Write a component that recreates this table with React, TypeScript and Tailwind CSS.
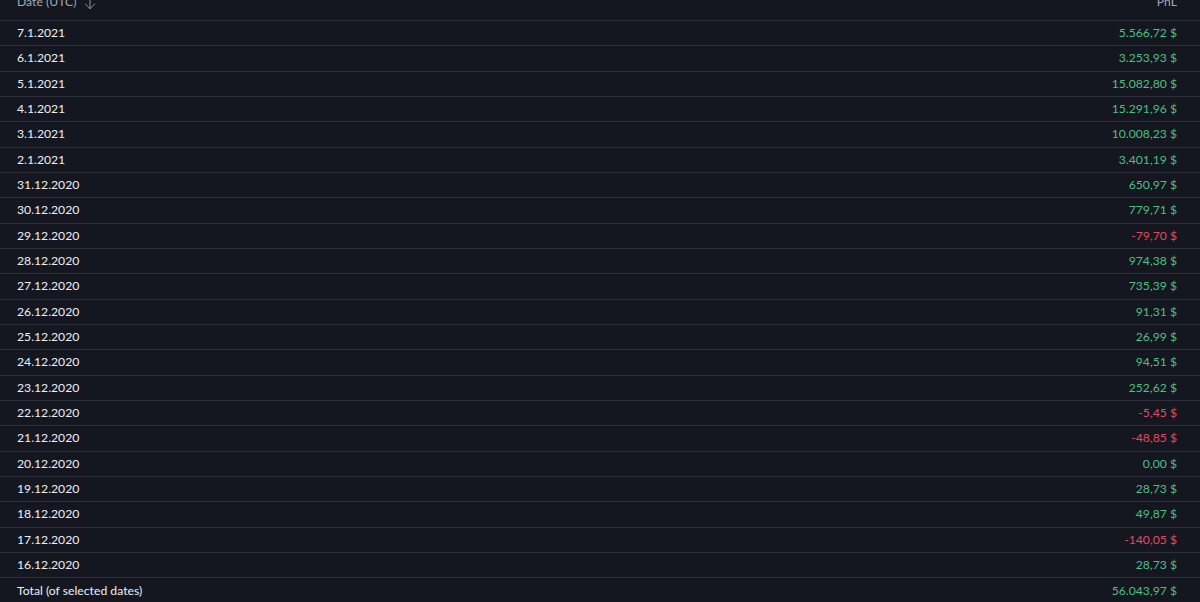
import { ArrowDown } from "lucide-react";

const rows: [string, string][] = [
  ["7.1.2021", "5.566,72 $"],
  ["6.1.2021", "3.253,93 $"],
  ["5.1.2021", "15.082,80 $"],
  ["4.1.2021", "15.291,96 $"],
  ["3.1.2021", "10.008,23 $"],
  ["2.1.2021", "3.401,19 $"],
  ["31.12.2020", "650,97 $"],
  ["30.12.2020", "779,71 $"],
  ["29.12.2020", "-79,70 $"],
  ["28.12.2020", "974,38 $"],
  ["27.12.2020", "735,39 $"],
  ["26.12.2020", "91,31 $"],
  ["25.12.2020", "26,99 $"],
  ["24.12.2020", "94,51 $"],
  ["23.12.2020", "252,62 $"],
  ["22.12.2020", "-5,45 $"],
  ["21.12.2020", "-48,85 $"],
  ["20.12.2020", "0,00 $"],
  ["19.12.2020", "28,73 $"],
  ["18.12.2020", "49,87 $"],
  ["17.12.2020", "-140,05 $"],
  ["16.12.2020", "28,73 $"],
];

export default function App() {
  return (
    <div
      className="h-[602px] w-[1200px] overflow-hidden bg-[#141720] text-[12.2px] text-[#eceef2]"
      style={{ fontFamily: "Lato, 'Open Sans', sans-serif" }}
    >
      <div className="-mt-[8px]">
        {/* header, partly scrolled out of view */}
        <div className="flex h-[29px] items-end justify-between border-b border-[#2b2f3a] pb-[9px] pl-[17px] pr-[23px] text-[#a3a7b2]">
          <div className="flex items-end gap-[6px]">
            <span>Date (UTC)</span>
            <ArrowDown size={16} strokeWidth={1.3} className="mb-[-1px]" />
          </div>
          <span>PnL</span>
        </div>
        {rows.map(([date, pnl]) => (
          <div
            key={date}
            className="flex h-[25.33px] items-center justify-between border-b border-[#2b2f3a] pl-[17px] pr-[23px]"
          >
            <span>{date}</span>
            <span className={pnl.startsWith("-") ? "text-[#e5485f]" : "text-[#4fbf80]"}>{pnl}</span>
          </div>
        ))}
        <div className="flex h-[25.33px] items-center justify-between pl-[17px] pr-[23px]">
          <span>Total (of selected dates)</span>
          <span className="text-[#4fbf80]">56.043,97 $</span>
        </div>
      </div>
    </div>
  );
}
